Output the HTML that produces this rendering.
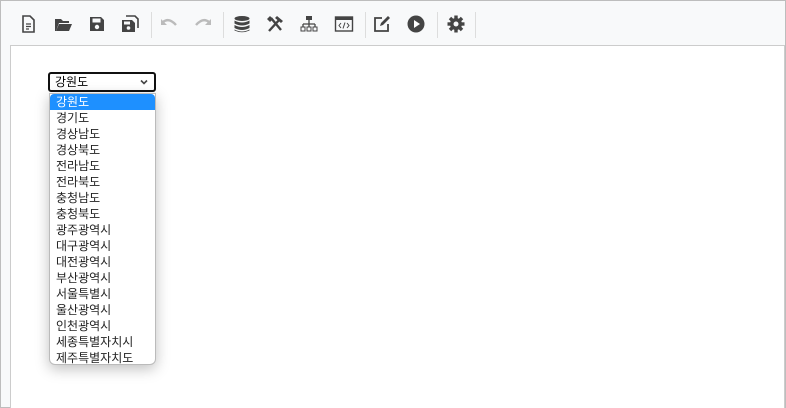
<!DOCTYPE html>
<html><head><meta charset="utf-8"><style>
*{margin:0;padding:0;box-sizing:border-box}
body{width:786px;height:408px;overflow:hidden;background:#fff;font-family:"Liberation Sans","Noto Sans CJK KR",sans-serif}
#frame{position:absolute;left:0;top:0;width:786px;height:408px;border:1px solid #bdbdbd;background:#f8f9fa}
#content{position:absolute;left:9px;top:44px;width:775px;height:363px;background:#fff;border-left:1px solid #ccc;border-top:1px solid #ccc;border-right:1px solid #ccc}
.ic{position:absolute;top:13px;width:20px;height:20px}
.sep{position:absolute;top:11px;width:1px;height:26px;background:#ddd}
#sel{position:absolute;left:47px;top:71px;width:108px;height:20px;border:2px solid #111;border-radius:3px;background:#fff;font-size:12px;line-height:16px;padding-left:5px;color:#000}
#sel svg{position:absolute;right:6px;top:5px}
#list{position:absolute;left:48px;top:92px;width:107px;height:272px;background:#fff;border:1px solid #bbb;border-radius:0 0 6px 6px;box-shadow:0 4px 14px rgba(0,0,0,.25);overflow:hidden}
#list div{height:16px;line-height:16px;font-size:12px;padding-left:6px;color:#222}
#list div.a{background:#1e90ff;color:#fff;border-radius:4px 4px 0 0}
</style></head><body>
<div id="frame">
<svg class="ic" style="left:17px" viewBox="0 0 20 20"><path d="M5 2h7l4 4v12H5z" fill="none" stroke="#444" stroke-width="1.6"/><path d="M8 10h5M8 12.5h5M8 15h3" stroke="#444" stroke-width="1.2"/></svg>
<svg class="ic" style="left:52px" viewBox="0 0 20 20"><path d="M2 5h6l2 2h6v2H6l-3 8H2z" fill="#444"/><path d="M6 10h13l-3 7H3z" fill="#444"/></svg>
<svg class="ic" style="left:86px" viewBox="0 0 20 20"><path d="M3 3h11l3 3v11H3z" fill="#444"/><rect x="5.5" y="4.5" width="8" height="4" fill="#f8f9fa"/><circle cx="10" cy="13" r="2.2" fill="#f8f9fa"/></svg>
<svg class="ic" style="left:119px" viewBox="0 0 20 20"><path d="M6 2h9l3 3v9" fill="none" stroke="#444" stroke-width="1.6"/><path d="M2 6h10l3 3v9H2z" fill="#444"/><rect x="4" y="7.5" width="6" height="3" fill="#f8f9fa"/><circle cx="8.5" cy="14" r="1.8" fill="#f8f9fa"/></svg>
<div class="sep" style="left:150px"></div>
<svg class="ic" style="left:158px" viewBox="0 0 20 20"><path d="M4 8 Q10 3 17 11" fill="none" stroke="#bbb" stroke-width="2.4"/><path d="M2 5v6h6z" fill="#bbb"/></svg>
<svg class="ic" style="left:192px" viewBox="0 0 20 20"><path d="M16 8 Q10 3 3 11" fill="none" stroke="#bbb" stroke-width="2.4"/><path d="M18 5v6h-6z" fill="#bbb"/></svg>
<div class="sep" style="left:222px"></div>
<svg class="ic" style="left:231px" viewBox="0 0 20 20"><ellipse cx="10" cy="4.5" rx="7.5" ry="2.5" fill="#444"/><path d="M2.5 6.5q7.5 4 15 0v3q-7.5 4-15 0zM2.5 11q7.5 4 15 0v3q-7.5 4-15 0zM2.5 15.5q7.5 4 15 0v1q-7.5 3.5-15 0z" fill="#444"/></svg>
<svg class="ic" style="left:264px" viewBox="0 0 20 20"><path d="M4 17L15 5M6 4l10 12" stroke="#444" stroke-width="2.4"/><path d="M12 2l6 5-2 2-6-5zM2 5l3-3 3 3-3 3z" fill="#444"/></svg>
<svg class="ic" style="left:298px" viewBox="0 0 20 20"><rect x="7" y="2" width="6" height="4" fill="#444"/><path d="M10 6v4M4 10h12M4 10v3M10 10v3M16 10v3" stroke="#444" stroke-width="1.3" fill="none"/><rect x="2" y="13" width="4" height="4" fill="none" stroke="#444"/><rect x="8" y="13" width="4" height="4" fill="none" stroke="#444"/><rect x="14" y="13" width="4" height="4" fill="none" stroke="#444"/></svg>
<svg class="ic" style="left:333px" viewBox="0 0 20 20"><rect x="1.5" y="3" width="17" height="14" fill="none" stroke="#444" stroke-width="1.4"/><rect x="1.5" y="3" width="17" height="3" fill="#444"/><path d="M7 9l-2 2.5 2 2.5M13 9l2 2.5-2 2.5M11 8.5l-2 6" stroke="#444" fill="none" stroke-width="1"/></svg>
<div class="sep" style="left:364px"></div>
<svg class="ic" style="left:371px" viewBox="0 0 20 20"><path d="M10 4H3v13h13v-7" fill="none" stroke="#444" stroke-width="1.8"/><path d="M8 12l1-3 7-7 2 2-7 7z" fill="#444"/></svg>
<svg class="ic" style="left:405px" viewBox="0 0 20 20"><circle cx="10" cy="10" r="8.5" fill="#444"/><path d="M8 6v8l6-4z" fill="#fff"/></svg>
<div class="sep" style="left:436px"></div>
<svg class="ic" style="left:445px" viewBox="0 0 20 20"><g fill="#444"><circle cx="10" cy="10" r="6"/><rect x="8.3" y="1.5" width="3.4" height="17"/><rect x="1.5" y="8.3" width="17" height="3.4"/><rect x="8.3" y="1.5" width="3.4" height="17" transform="rotate(45 10 10)"/><rect x="8.3" y="1.5" width="3.4" height="17" transform="rotate(-45 10 10)"/></g><circle cx="10" cy="10" r="2.5" fill="#f8f9fa"/></svg>
<div class="sep" style="left:474px"></div>
<div id="content"></div>
<div id="sel">강원도<svg width="8" height="6" viewBox="0 0 8 6"><path d="M1 1.5l3 3 3-3" fill="none" stroke="#444" stroke-width="1.6"/></svg></div>
<div id="list">
<div class="a">강원도</div><div>경기도</div><div>경상남도</div><div>경상북도</div><div>전라남도</div><div>전라북도</div><div>충청남도</div><div>충청북도</div><div>광주광역시</div><div>대구광역시</div><div>대전광역시</div><div>부산광역시</div><div>서울특별시</div><div>울산광역시</div><div>인천광역시</div><div>세종특별자치시</div><div>제주특별자치도</div>
</div>
</div>
</body></html>
